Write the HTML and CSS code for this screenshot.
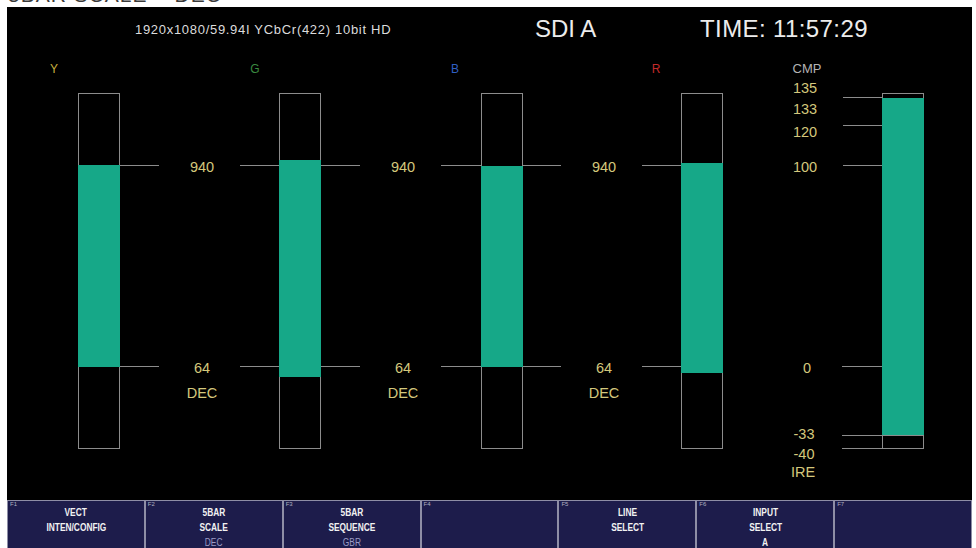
FILE: index.html
```html
<!DOCTYPE html>
<html lang="en">
<head>
<meta charset="utf-8">
<title>5BAR SCALE</title>
<link rel="stylesheet" href="styles.css">
</head>
<body>
<div class="caption"><span class="caption-text">5BAR SCALE = DEC</span></div>
<div class="screen">
  <div class="header">
    <div class="slot slot-fmt">1920x1080/59.94I YCbCr(422) 10bit HD</div>
    <div class="slot slot-sdi">SDI A</div>
    <div class="slot slot-time">TIME: 11:57:29</div>
  </div>
  <svg class="meter" viewBox="7 51 965 449" width="965" height="449" xmlns="http://www.w3.org/2000/svg">
    <text class="ch ch-y" x="54" y="73">Y</text>
    <text class="ch ch-g" x="255" y="73">G</text>
    <text class="ch ch-b" x="455" y="73">B</text>
    <text class="ch ch-r" x="656" y="73">R</text>
    <text class="ch ch-cmp" x="807" y="73">CMP</text>

    <g class="ticks">
      <line x1="120" y1="165.5" x2="159" y2="165.5"/>
      <line x1="240" y1="165.5" x2="279" y2="165.5"/>
      <line x1="320" y1="165.5" x2="360" y2="165.5"/>
      <line x1="441" y1="165.5" x2="481" y2="165.5"/>
      <line x1="522" y1="165.5" x2="561" y2="165.5"/>
      <line x1="642" y1="165.5" x2="682" y2="165.5"/>
      <line x1="120" y1="366.5" x2="159" y2="366.5"/>
      <line x1="240" y1="366.5" x2="279" y2="366.5"/>
      <line x1="320" y1="366.5" x2="360" y2="366.5"/>
      <line x1="441" y1="366.5" x2="481" y2="366.5"/>
      <line x1="522" y1="366.5" x2="561" y2="366.5"/>
      <line x1="642" y1="366.5" x2="682" y2="366.5"/>
      <line x1="843" y1="97.5" x2="883" y2="97.5"/>
      <line x1="843" y1="125.5" x2="883" y2="125.5"/>
      <line x1="843" y1="165.5" x2="883" y2="165.5"/>
      <line x1="842" y1="366.5" x2="883" y2="366.5"/>
      <line x1="842" y1="448.5" x2="883" y2="448.5"/>
    </g>

    <rect class="box" x="78.5" y="93.5" width="41" height="355"/>
    <rect class="box" x="279.5" y="93.5" width="41" height="355"/>
    <rect class="box" x="481.5" y="93.5" width="41" height="355"/>
    <rect class="box" x="681.5" y="93.5" width="41" height="355"/>
    <rect class="box" x="882.5" y="93.5" width="41" height="355"/>

    <rect class="fill" x="78" y="165" width="42" height="202"/>
    <rect class="fill" x="279" y="160" width="42" height="217"/>
    <rect class="fill" x="481" y="166" width="42" height="201"/>
    <rect class="fill" x="681" y="163" width="42" height="210"/>
    <rect class="fill" x="882" y="98" width="42" height="337"/>
    <line class="tick" x1="842" y1="435.5" x2="924" y2="435.5"/>

    <text class="lbl" x="202" y="172">940</text>
    <text class="lbl" x="403" y="172">940</text>
    <text class="lbl" x="604" y="172">940</text>
    <text class="lbl" x="202" y="373">64</text>
    <text class="lbl" x="403" y="373">64</text>
    <text class="lbl" x="604" y="373">64</text>
    <text class="lbl" x="202" y="398">DEC</text>
    <text class="lbl" x="403" y="398">DEC</text>
    <text class="lbl" x="604" y="398">DEC</text>

    <text class="lbl" x="805" y="93">135</text>
    <text class="lbl" x="805" y="114">133</text>
    <text class="lbl" x="805" y="137">120</text>
    <text class="lbl" x="805" y="172">100</text>
    <text class="lbl" x="807" y="373">0</text>
    <text class="lbl" x="804" y="439">-33</text>
    <text class="lbl" x="804" y="459">-40</text>
    <text class="lbl" x="803" y="477">IRE</text>
  </svg>
</div>
<div class="fkeys">
  <div class="fkey"><span class="fn">F1</span><span class="ln">VECT</span><span class="ln">INTEN/CONFIG</span></div>
  <div class="fkey"><span class="fn">F2</span><span class="ln">5BAR</span><span class="ln">SCALE</span><span class="ln val">DEC</span></div>
  <div class="fkey"><span class="fn">F3</span><span class="ln">5BAR</span><span class="ln">SEQUENCE</span><span class="ln val">GBR</span></div>
  <div class="fkey"><span class="fn">F4</span></div>
  <div class="fkey"><span class="fn">F5</span><span class="ln">LINE</span><span class="ln">SELECT</span></div>
  <div class="fkey"><span class="fn">F6</span><span class="ln">INPUT</span><span class="ln">SELECT</span><span class="ln">A</span></div>
  <div class="fkey"><span class="fn">F7</span></div>
</div>
</body>
</html>
```
FILE: styles.css
```css
html, body {
  margin: 0;
  padding: 0;
}
body {
  width: 976px;
  height: 548px;
  overflow: hidden;
  background: #ffffff;
  font-family: "Liberation Sans", Arial, sans-serif;
}
.caption {
  height: 7px;
  overflow: hidden;
  display: flex;
  align-items: flex-end;
  padding-left: 8px;
}
.caption-text {
  font-size: 21px;
  line-height: 21px;
  color: #3a3a3a;
  letter-spacing: 1px;
  flex: none;
  margin-bottom: 2px;
  white-space: nowrap;
}
.screen {
  margin-left: 7px;
  width: 965px;
  height: 493px;
  background: #000000;
  display: flex;
  flex-direction: column;
}
.header {
  height: 44px;
  display: flex;
  align-items: center;
  color: #ececec;
  flex: none;
}
.slot {
  white-space: nowrap;
}
.slot-fmt {
  width: 400px;
  padding-left: 128px;
  font-size: 13px;
  letter-spacing: 0.7px;
  color: #dcdcdc;
}
.slot-sdi {
  width: 165px;
  font-size: 24px;
}
.slot-time {
  font-size: 24px;
  letter-spacing: 0.4px;
}
.meter {
  display: block;
  flex: none;
}
.ch {
  font-family: "Liberation Sans", Arial, sans-serif;
  font-size: 12px;
  text-anchor: middle;
}
.ch-y { fill: #c7ae3e; }
.ch-g { fill: #3a8a40; }
.ch-b { fill: #2f5fc4; }
.ch-r { fill: #c22a2a; }
.ch-cmp { fill: #b4b4b4; font-size: 13px; }
.ticks line,
.tick {
  stroke: #8c8c8c;
  stroke-width: 1;
}
.box {
  fill: none;
  stroke: #8c8c8c;
  stroke-width: 1;
}
.fill {
  fill: #16a888;
}
.lbl {
  font-family: "Liberation Sans", Arial, sans-serif;
  font-size: 14.5px;
  fill: #d4c87c;
  text-anchor: middle;
}
.fkeys {
  margin-left: 7px;
  width: 965px;
  height: 48px;
  box-sizing: border-box;
  padding: 1px 1px 0 1px;
  background: #8e8ea6;
  display: grid;
  grid-template-columns: repeat(7, 1fr);
  column-gap: 2px;
}
.fkey {
  position: relative;
  background: #1d1c4b;
  display: flex;
  flex-direction: column;
  align-items: center;
  padding-top: 4px;
  font-family: "Liberation Sans", Arial, sans-serif;
  font-weight: bold;
  font-size: 11px;
  line-height: 15px;
  color: #f2f2f2;
}
.fkey .ln {
  display: block;
  white-space: nowrap;
  transform: scaleX(0.76);
}
.fkey .val {
  color: #9c9cc6;
  font-weight: normal;
}
.fn {
  position: absolute;
  top: 0;
  left: 2px;
  font-family: "Liberation Sans", sans-serif;
  font-weight: normal;
  font-size: 6px;
  line-height: 7px;
  color: #b0b0c0;
}
```
